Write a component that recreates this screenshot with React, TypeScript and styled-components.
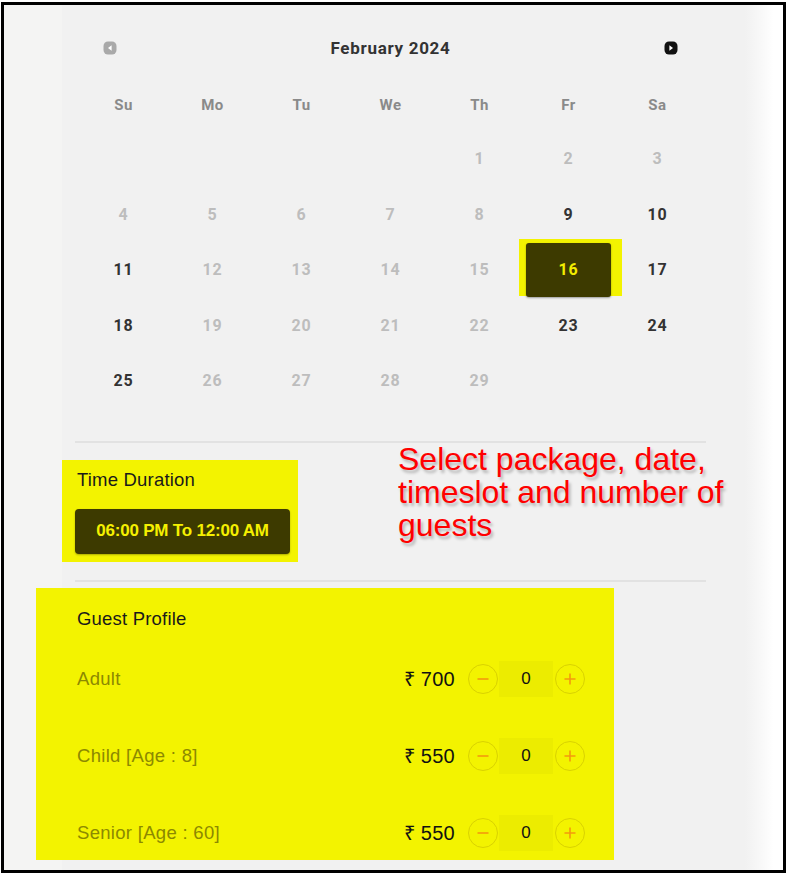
import React from 'react';
import styled, { createGlobalStyle } from 'styled-components';

const Global = createGlobalStyle`
  html, body { margin: 0; padding: 0; background: #fff; }
  body { font-family: "Liberation Sans", Arial, sans-serif; }
`;

const Frame = styled.div`
  margin: 2px 4px 3px 1px;
  height: 871px;
  box-sizing: border-box;
  border: 3px solid #000;
  display: flex;
  background: #fff;
  overflow: hidden;
`;

const SideStrip = styled.div`
  width: 58px;
  flex: none;
  background: #f4f4f3;
`;

const Panel = styled.div`
  width: 683px;
  flex: none;
  box-sizing: border-box;
  background: #f1f1f1;
  padding: 28px 39px 0 13px;
  display: flex;
  flex-direction: column;
`;

const Fade = styled.div`
  flex: 1;
  background: linear-gradient(to right, #f1f1f1 0%, #f8f8f8 40%, #fff 75%);
`;

const CalHeader = styled.div`
  height: 30px;
  display: flex;
  align-items: center;
  justify-content: space-between;
  padding: 0 28px;
`;

const MonthTitle = styled.div`
  font-family: Roboto, "Open Sans", sans-serif;
  font-weight: 700;
  font-size: 17px;
  letter-spacing: 0.7px;
  color: #333;
`;

const NavIcon = styled.svg`
  width: 14px;
  height: 14px;
  display: block;
`;

const Grid = styled.div`
  margin-top: 15px;
  padding: 0 4px;
  display: grid;
  grid-template-columns: repeat(7, 89px);
  grid-template-rows: 53px repeat(5, 55.5px);
`;

const WeekDay = styled.div`
  display: flex;
  align-items: center;
  justify-content: center;
  font-family: Roboto, "Open Sans", sans-serif;
  font-weight: 700;
  font-size: 15px;
  letter-spacing: 0.5px;
  color: #8a8a8a;
`;

const DayCell = styled.div<{ $state: 'off' | 'on' | 'empty' }>`
  position: relative;
  z-index: 0;
  display: flex;
  align-items: center;
  justify-content: center;
  font-family: Roboto, "Open Sans", sans-serif;
  font-weight: 700;
  font-size: 16px;
  letter-spacing: 0.8px;
  color: ${p => (p.$state === 'on' ? '#333' : '#bdbdbd')};
`;

const Highlight = styled.span`
  position: absolute;
  left: -5px;
  right: -9px;
  top: -3px;
  bottom: 2px;
  background: #f3f300;
`;

const SelectedBox = styled.div`
  position: relative;
  width: 85px;
  height: 54px;
  border-radius: 3px;
  background: #3d3a00;
  color: #f3ec00;
  display: flex;
  align-items: center;
  justify-content: center;
  box-shadow: 0 1px 2px rgba(0, 0, 0, 0.35);
`;

const Divider = styled.div<{ $top: number }>`
  margin-top: ${p => p.$top}px;
  height: 2px;
  background: #e2e2e2;
  flex: none;
`;

const TimeRow = styled.div`
  display: flex;
  align-items: flex-start;
`;

const TimeBox = styled.div`
  margin: 17px 0 0 -13px;
  width: 236px;
  flex: none;
  box-sizing: border-box;
  background: #f3f300;
  padding: 10px 8px 8px 13px;
`;

const SectionTitle = styled.div`
  font-size: 18.5px;
  letter-spacing: 0.2px;
  line-height: 20px;
  color: #1a1a1a;
  padding-left: 2px;
`;

const SlotButton = styled.div`
  margin-top: 19px;
  height: 45px;
  border-radius: 4px;
  background: #3d3a00;
  color: #f5f000;
  font-weight: 700;
  font-size: 17px;
  letter-spacing: -0.2px;
  display: flex;
  align-items: center;
  justify-content: center;
  box-shadow: 0 1px 2px rgba(0, 0, 0, 0.3);
`;

const Annotation = styled.div`
  margin-left: 100px;
  font-size: 32px;
  line-height: 33px;
  color: #ff0000;
  white-space: nowrap;
  text-shadow: 2px 3px 3px rgba(0, 0, 0, 0.25);
`;

const GuestBox = styled.div`
  margin: 6px 0 0 -39px;
  width: 578px;
  box-sizing: border-box;
  background: #f3f300;
  padding: 20px 29px 7px 41px;
  display: flex;
  flex-direction: column;
`;

const GuestTitle = styled.div`
  font-size: 18.5px;
  letter-spacing: 0.2px;
  line-height: 22px;
  color: #1a1a1a;
  margin-bottom: 29px;
`;

const GuestList = styled.div`
  display: flex;
  flex-direction: column;
  gap: 37px;
`;

const GuestRow = styled.div`
  height: 40px;
  display: flex;
  align-items: center;
`;

const GuestLabel = styled.div`
  flex: 1;
  font-size: 18.5px;
  letter-spacing: 0.3px;
  color: #8c8900;
`;

const Price = styled.div`
  font-size: 20px;
  letter-spacing: 0.3px;
  color: #111;
  margin-right: 13px;
`;

const RoundBtn = styled.div`
  width: 30px;
  height: 30px;
  box-sizing: border-box;
  border-radius: 50%;
  border: 1.5px solid #d9d200;
  display: flex;
  align-items: center;
  justify-content: center;
  flex: none;
`;

const Count = styled.div`
  width: 54px;
  height: 36px;
  margin: 0 2px 0 1px;
  background: #ecec00;
  display: flex;
  align-items: center;
  justify-content: center;
  font-size: 17px;
  color: #111;
`;

const PrevIcon = () => (
  <NavIcon viewBox="0 0 14 14">
    <rect x="0.5" y="0.5" width="13" height="13" rx="4.5" fill="#a9a9a9" />
    <path d="M8.6 4.2 L5 7 L8.6 9.8 Z" fill="#fff" />
  </NavIcon>
);

const NextIcon = () => (
  <NavIcon viewBox="0 0 14 14">
    <rect x="0.5" y="0.5" width="13" height="13" rx="4.5" fill="#111" />
    <path d="M5.4 4.2 L9 7 L5.4 9.8 Z" fill="#fff" />
  </NavIcon>
);

const Minus = () => (
  <svg width="14" height="14" viewBox="0 0 14 14">
    <path d="M1.5 7 H12.5" stroke="#f39a0c" strokeWidth="1.6" />
  </svg>
);

const Plus = () => (
  <svg width="14" height="14" viewBox="0 0 14 14">
    <path d="M1.5 7 H12.5 M7 1.5 V12.5" stroke="#f39a0c" strokeWidth="1.6" />
  </svg>
);

const weekDays = ['Su', 'Mo', 'Tu', 'We', 'Th', 'Fr', 'Sa'];
const enabled = new Set([9, 10, 11, 17, 18, 23, 24, 25]);
const selected = 16;

const cells: (number | null)[] = [null, null, null, null];
for (let d = 1; d <= 29; d++) cells.push(d);
while (cells.length < 35) cells.push(null);

const guests = [
  { label: 'Adult', price: '₹ 700' },
  { label: 'Child [Age : 8]', price: '₹ 550' },
  { label: 'Senior [Age : 60]', price: '₹ 550' },
];

export default function App() {
  return (
    <>
      <Global />
      <Frame>
        <SideStrip />
        <Panel>
          <CalHeader>
            <PrevIcon />
            <MonthTitle>February 2024</MonthTitle>
            <NextIcon />
          </CalHeader>
          <Grid>
            {weekDays.map(w => (
              <WeekDay key={w}>{w}</WeekDay>
            ))}
            {cells.map((d, i) => {
              if (d === null) return <DayCell key={i} $state="empty" />;
              if (d === selected)
                return (
                  <DayCell key={i} $state="on">
                    <Highlight />
                    <SelectedBox>{d}</SelectedBox>
                  </DayCell>
                );
              return (
                <DayCell key={i} $state={enabled.has(d) ? 'on' : 'off'}>
                  {d}
                </DayCell>
              );
            })}
          </Grid>
          <Divider $top={32} />
          <TimeRow>
            <TimeBox>
              <SectionTitle>Time Duration</SectionTitle>
              <SlotButton>06:00 PM To 12:00 AM</SlotButton>
            </TimeBox>
            <Annotation>
              Select package, date,
              <br />
              timeslot and number of
              <br />
              guests
            </Annotation>
          </TimeRow>
          <Divider $top={18} />
          <GuestBox>
            <GuestTitle>Guest Profile</GuestTitle>
            <GuestList>
              {guests.map(g => (
                <GuestRow key={g.label}>
                  <GuestLabel>{g.label}</GuestLabel>
                  <Price>{g.price}</Price>
                  <RoundBtn>
                    <Minus />
                  </RoundBtn>
                  <Count>0</Count>
                  <RoundBtn>
                    <Plus />
                  </RoundBtn>
                </GuestRow>
              ))}
            </GuestList>
          </GuestBox>
        </Panel>
        <Fade />
      </Frame>
    </>
  );
}
